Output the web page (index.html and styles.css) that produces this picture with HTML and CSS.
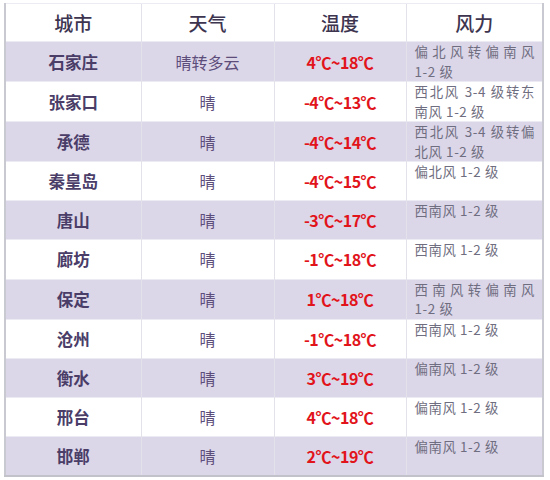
FILE: index.html
```html
<!DOCTYPE html>
<html lang="zh-CN">
<head>
<meta charset="utf-8">
<link rel="stylesheet" href="styles.css">
</head>
<body>
<table class="weather">
  <colgroup>
    <col class="c1"><col class="c2"><col class="c3"><col class="c4">
  </colgroup>
  <thead>
    <tr><th>城市</th><th>天气</th><th>温度</th><th>风力</th></tr>
  </thead>
  <tbody>
    <tr class="alt"><td class="city">石家庄</td><td class="sky">晴转多云</td><td class="temp">4℃~18℃</td><td class="wind">偏北风转偏南风 <span class="nw">1-2 级</span></td></tr>
    <tr><td class="city">张家口</td><td class="sky">晴</td><td class="temp">-4℃~13℃</td><td class="wind">西北风 <span class="nw">3-4 级</span><span class="nw">转东</span>南风 <span class="nw">1-2 级</span></td></tr>
    <tr class="alt"><td class="city">承德</td><td class="sky">晴</td><td class="temp">-4℃~14℃</td><td class="wind">西北风 <span class="nw">3-4 级</span><span class="nw">转偏</span>北风 <span class="nw">1-2 级</span></td></tr>
    <tr><td class="city">秦皇岛</td><td class="sky">晴</td><td class="temp">-4℃~15℃</td><td class="wind">偏北风 <span class="nw">1-2 级</span></td></tr>
    <tr class="alt"><td class="city">唐山</td><td class="sky">晴</td><td class="temp">-3℃~17℃</td><td class="wind">西南风 <span class="nw">1-2 级</span></td></tr>
    <tr><td class="city">廊坊</td><td class="sky">晴</td><td class="temp">-1℃~18℃</td><td class="wind">西南风 <span class="nw">1-2 级</span></td></tr>
    <tr class="alt"><td class="city">保定</td><td class="sky">晴</td><td class="temp">1℃~18℃</td><td class="wind">西南风转偏南风 <span class="nw">1-2 级</span></td></tr>
    <tr><td class="city">沧州</td><td class="sky">晴</td><td class="temp">-1℃~18℃</td><td class="wind">西南风 <span class="nw">1-2 级</span></td></tr>
    <tr class="alt"><td class="city">衡水</td><td class="sky">晴</td><td class="temp">3℃~19℃</td><td class="wind">偏南风 <span class="nw">1-2 级</span></td></tr>
    <tr><td class="city">邢台</td><td class="sky">晴</td><td class="temp">4℃~18℃</td><td class="wind">偏南风 <span class="nw">1-2 级</span></td></tr>
    <tr class="alt"><td class="city">邯郸</td><td class="sky">晴</td><td class="temp">2℃~19℃</td><td class="wind">偏南风 <span class="nw">1-2 级</span></td></tr>
  </tbody>
</table>
</body>
</html>
```

FILE: styles.css
```css
html, body {
  margin: 0;
  padding: 0;
  background: #ffffff;
}

body {
  padding: 3px 0 0 4px;
  font-family: "Noto Sans CJK SC", "Noto Sans", sans-serif;
}

.weather {
  border-collapse: collapse;
  table-layout: fixed;
  width: 538px;
  border-left: 2px solid #c9c9d1;
  border-right: 2px solid #c9c9d1;
  border-bottom: 2px solid #c2c2ca;
  border-top: 1px solid #e4e4ea;
}

.c1 { width: 136px; }
.c2 { width: 133px; }
.c3 { width: 132px; }
.c4 { width: 137px; }

.weather th,
.weather td {
  border-left: 1px solid #e3e1ea;
  border-top: 1px solid #eceaf2;
  padding: 0;
  text-align: center;
  vertical-align: middle;
}

.weather th {
  height: 37px;
  font-size: 19px;
  font-weight: 500;
  color: #3d3550;
}

.weather tbody tr {
  height: 39.2px;
}

.weather tr.alt {
  background: #dcd6e9;
}

.city {
  font-size: 16.5px;
  font-weight: 700;
  color: #4a3d68;
}

.sky {
  font-size: 16px;
  color: #5c4d7a;
}

.temp {
  font-size: 16px;
  font-weight: 700;
  color: #e2141b;
  letter-spacing: -0.5px;
}

.weather td.wind {
  vertical-align: top;
  text-align: justify;
  padding: 0 7px 0 8px;
  font-size: 13.4px;
  letter-spacing: 0.6px;
  line-height: 19.5px;
  color: #6f6e80;
}

.nw {
  white-space: nowrap;
}
```
